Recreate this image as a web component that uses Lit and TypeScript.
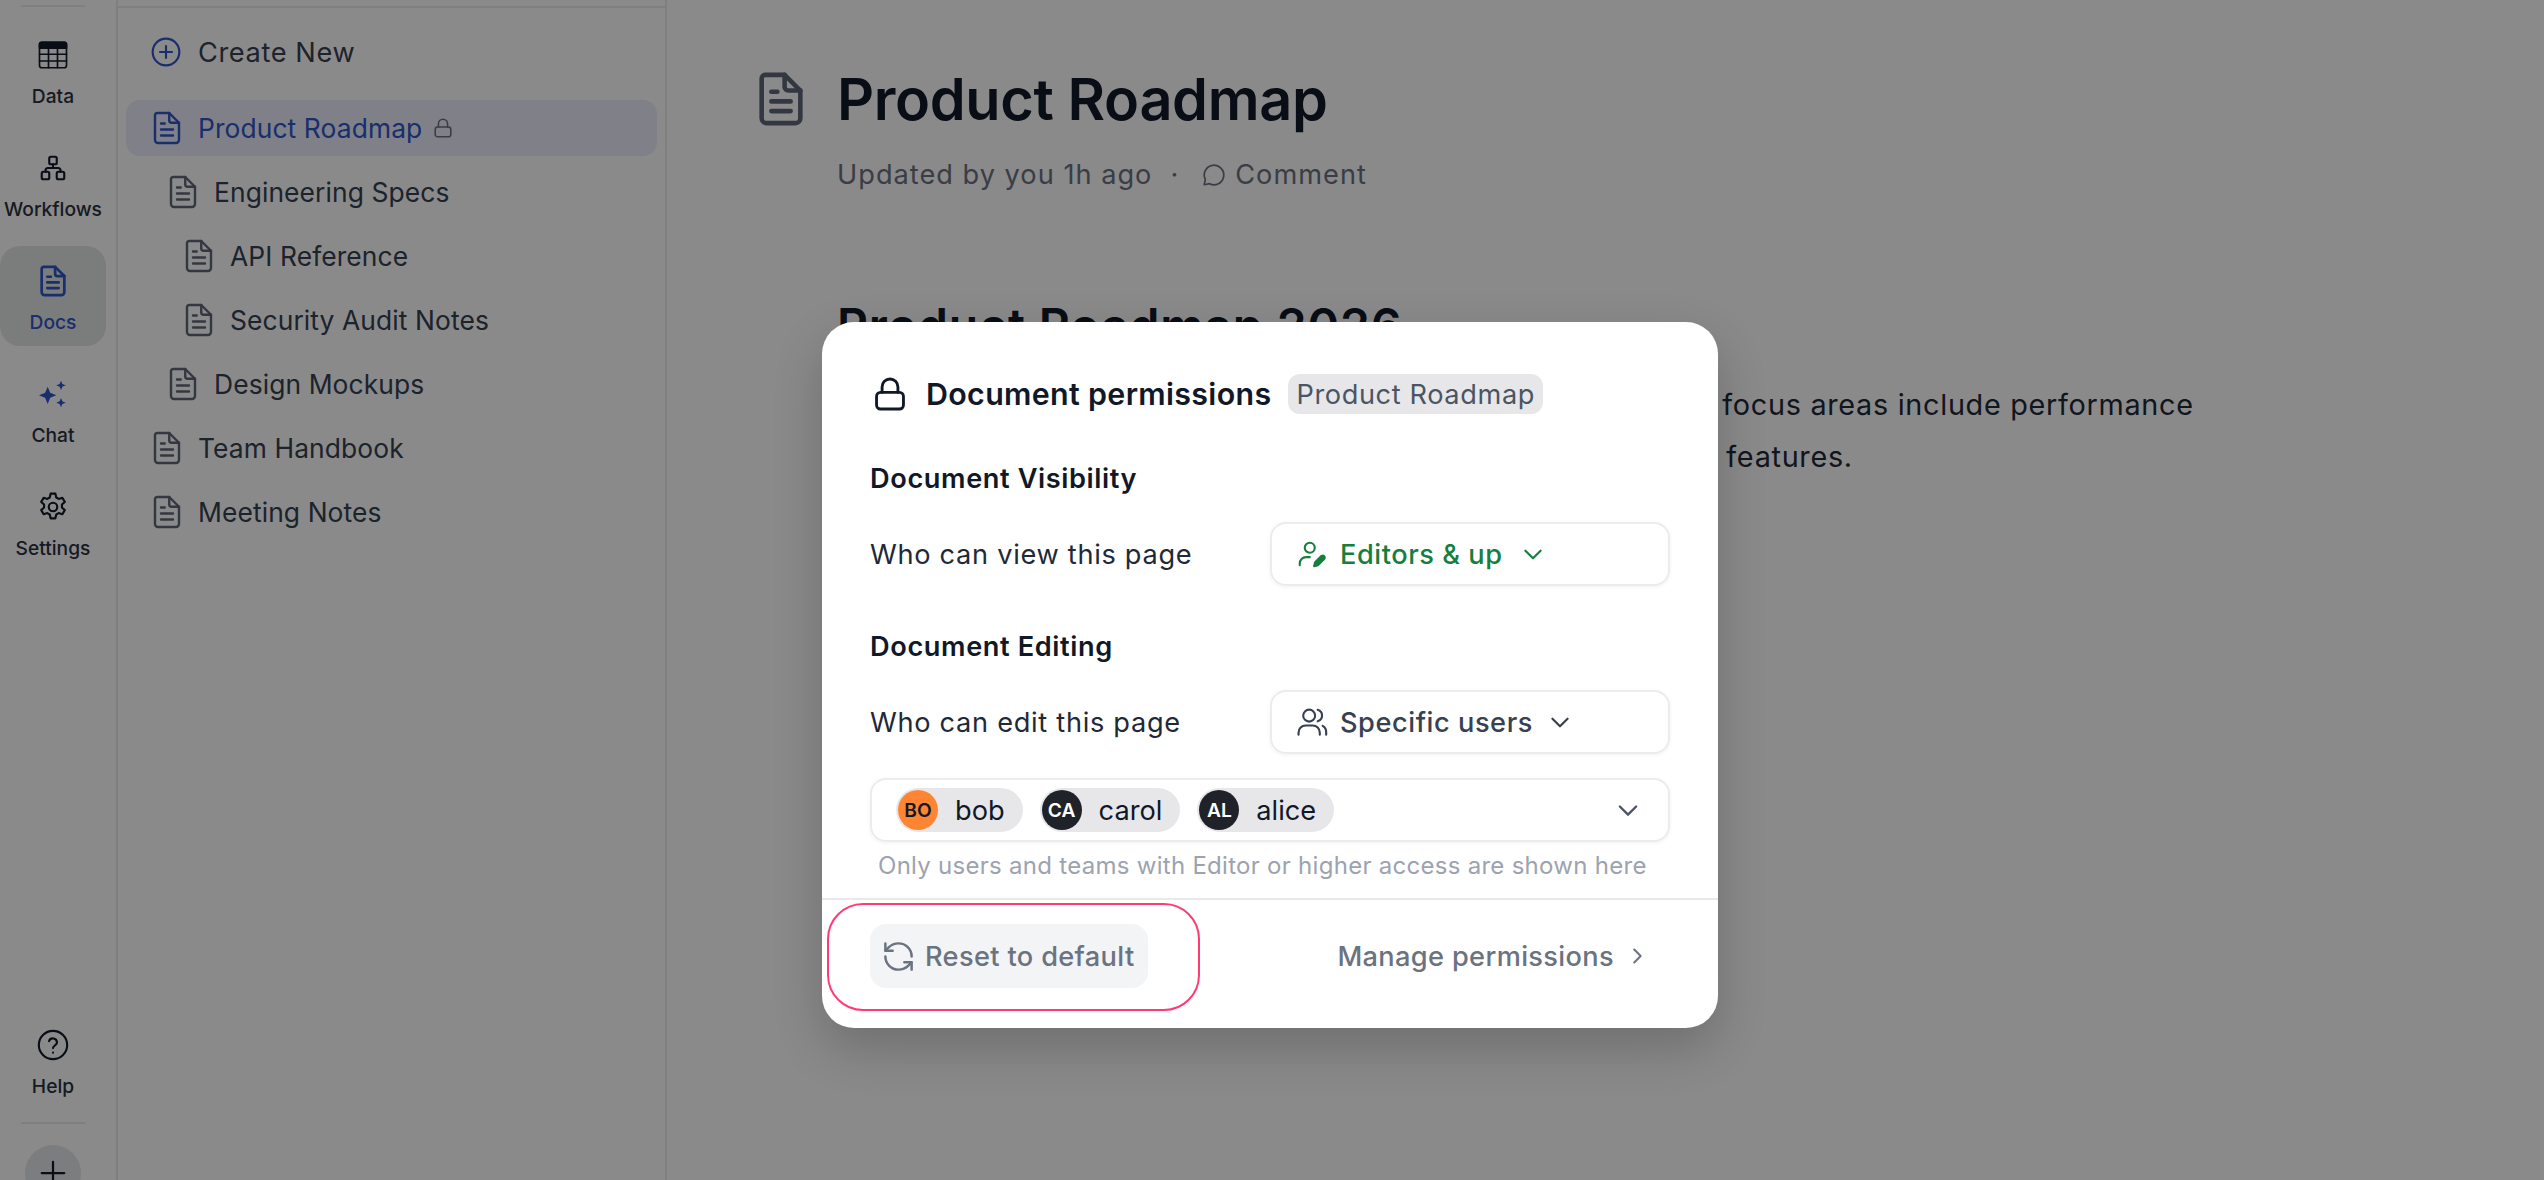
import {LitElement, html, css, svg} from 'lit';
import {customElement} from 'lit/decorators.js';

const icon = (body: unknown, size = 24, width = 1.5) => html`<svg
  width=${size}
  height=${size}
  viewBox="0 0 24 24"
  fill="none"
  stroke="currentColor"
  stroke-width=${width}
  stroke-linecap="round"
  stroke-linejoin="round"
>${body}</svg>`;

const docPath = svg`<path d="M5.500 2h8L20 8.500V20a2 2 0 0 1-2 2H6a2 2 0 0 1-2-2V3.500A1.500 1.500 0 0 1 5.500 2z"/><path d="M13.500 2v5a1.500 1.500 0 0 0 1.500 1.500h5"/><path d="M8 9h2.500M8 13h8M8 17h8"/>`;
const chevronDown = svg`<path d="M5 9l7 7 7-7"/>`;
const lockPath = svg`<rect x="3.500" y="11" width="17" height="10.500" rx="2.500"/><path d="M7 11V7.500a5 5 0 0 1 10 0V11"/>`;

const TREE = [
  {label: 'Product Roadmap', level: 0, active: true},
  {label: 'Engineering Specs', level: 1},
  {label: 'API Reference', level: 2},
  {label: 'Security Audit Notes', level: 2},
  {label: 'Design Mockups', level: 1},
  {label: 'Team Handbook', level: 0},
  {label: 'Meeting Notes', level: 0},
];

const USERS = [
  {initials: 'BO', name: 'bob', tone: 'orange'},
  {initials: 'CA', name: 'carol', tone: 'dark'},
  {initials: 'AL', name: 'alice', tone: 'dark'},
];

@customElement('app-root')
export class AppRoot extends LitElement {
  static styles = css`
    :host {
      display: block;
      position: relative;
      width: 2544px;
      height: 1180px;
      overflow: hidden;
      background: #fff;
      font-family: Inter, 'Noto Sans', sans-serif;
      color: #111827;
    }

    .page {
      display: flex;
      height: 100%;
    }

    .rail {
      flex: none;
      box-sizing: border-box;
      width: 118px;
      height: 1180px;
      padding-right: 10px;
      border-right: 2px solid #ebebeb;
      display: flex;
      flex-direction: column;
      color: #2b3140;
    }

    .rail-line {
      flex: none;
      height: 2px;
      margin: 5px 21px 13px;
      background: #ebebeb;
    }

    .rail-top {
      display: flex;
      flex-direction: column;
      gap: 13px;
    }

    .rail-bottom {
      margin-top: auto;
      margin-bottom: -21px;
      display: flex;
      flex-direction: column;
      align-items: center;
    }

    .rail-item {
      box-sizing: border-box;
      width: 106px;
      height: 100px;
      border-radius: 20px;
      display: flex;
      flex-direction: column;
      align-items: center;
      font-size: 19.2px;
      font-weight: 500;
      line-height: 24px;
      white-space: nowrap;
    }

    .rail-item .glyph {
      height: 36px;
      margin-top: 17px;
      margin-bottom: 11px;
      display: flex;
      align-items: center;
      justify-content: center;
      color: #111827;
    }

    .rail-item.active {
      background: #e3e7e7;
      color: #2f55c8;
    }

    .rail-item.active .glyph,
    .rail-item .glyph.blue {
      color: #2f55c8;
    }

    .rail-divider {
      width: 64px;
      height: 2px;
      margin-top: 12px;
      background: #ebebeb;
    }

    .add {
      width: 56px;
      height: 56px;
      margin-top: 21px;
      border-radius: 50%;
      background: #e5e7eb;
      display: flex;
      align-items: center;
      justify-content: center;
      color: #111827;
    }

    .side {
      flex: none;
      box-sizing: border-box;
      width: 549px;
      height: 1180px;
      border-right: 2px solid #ebebeb;
      padding: 0 8px;
      color: #374151;
      font-size: 26.4px;
      letter-spacing: 0.1px;
    }

    .side-line {
      height: 2px;
      margin: 6px -8px 0;
      background: #ebebeb;
    }

    .create {
      height: 56px;
      margin: 16px 0 20px;
      padding-left: 24px;
      display: flex;
      align-items: center;
      gap: 16px;
      font-size: 27.2px;
      letter-spacing: 0.6px;
    }

    .create svg {
      color: #2f55c8;
    }

    .tree {
      display: flex;
      flex-direction: column;
      gap: 8px;
    }

    .row {
      height: 56px;
      border-radius: 14px;
      display: flex;
      align-items: center;
      gap: 13px;
      color: #374151;
      white-space: nowrap;
    }

    .row .doc {
      flex: none;
      display: flex;
      color: #5f6779;
    }

    .row.active {
      background: #eceefb;
      color: #2f55c8;
    }

    .row.active .doc {
      color: #2f55c8;
    }

    .row .lock {
      display: flex;
      margin-left: -3px;
      color: #6b7280;
    }

    .main {
      flex: 1;
      min-width: 0;
      padding-left: 85px;
    }

    .title-row {
      display: flex;
      align-items: center;
      gap: 27px;
      margin-top: 66px;
      height: 66px;
    }

    .title-row .doc {
      display: flex;
      color: #5f6779;
    }

    h1 {
      margin: 0;
      font-size: 57.6px;
      font-weight: 600;
      line-height: 66px;
      letter-spacing: -0.35px;
      color: #111827;
    }

    .meta {
      margin: 26px 0 0 85px;
      display: flex;
      align-items: center;
      font-size: 27.2px;
      line-height: 34px;
      letter-spacing: 1px;
      color: #6b7280;
    }

    .meta .dot {
      margin: 0 22px 0 18px;
    }

    .meta .comment {
      display: flex;
      align-items: center;
      gap: 8px;
    }

    .doc-body {
      margin-left: 85px;
      width: 1500px;
    }

    h2 {
      margin: 106px 0 0;
      font-size: 48px;
      font-weight: 600;
      line-height: 56px;
      letter-spacing: 0.9px;
      color: #111827;
    }

    .doc-body p {
      margin: 25px 0 0;
      font-size: 28.8px;
      line-height: 52px;
      letter-spacing: 0.7px;
      color: #1f2937;
      white-space: nowrap;
    }

    .overlay {
      position: absolute;
      inset: 0;
      background: rgba(0, 0, 0, 0.46);
      box-sizing: border-box;
      padding: 322px 0 0 822px;
    }

    .dialog {
      width: 896px;
      height: 706px;
      box-sizing: border-box;
      background: #fff;
      border-radius: 32px;
      padding-top: 52px;
      box-shadow: 0 20px 50px rgba(0, 0, 0, 0.2);
      display: flex;
      flex-direction: column;
      position: relative;
    }

    .body {
      padding: 0 48px;
      flex: 1;
    }

    .head {
      height: 40px;
      display: flex;
      align-items: center;
      color: #111827;
    }

    .head .lock {
      display: flex;
      margin-left: 1px;
      margin-right: 17px;
    }

    .head .name {
      font-size: 30.4px;
      font-weight: 600;
      letter-spacing: 0.33px;
    }

    .tag {
      margin-left: 17px;
      height: 40px;
      padding: 0 8px;
      border-radius: 12px;
      background: #e7e7ea;
      color: #4b5563;
      font-size: 27.2px;
      letter-spacing: 0.6px;
      display: flex;
      align-items: center;
    }

    .section {
      margin: 0;
      font-size: 27.2px;
      font-weight: 600;
      line-height: 31px;
      letter-spacing: 0.6px;
      color: #111827;
    }

    .section.first {
      margin-top: 49px;
    }

    .section.second {
      margin-top: 45px;
    }

    .field {
      margin-top: 28px;
      display: flex;
      align-items: center;
      justify-content: space-between;
      font-size: 27.2px;
      letter-spacing: 0.7px;
      color: #1f2937;
    }

    .select {
      box-sizing: border-box;
      width: 400px;
      height: 64px;
      border: 2px solid #ececee;
      border-radius: 16px;
      box-shadow: 0 1px 4px rgba(0, 0, 0, 0.06);
      display: flex;
      align-items: center;
      padding-left: 23px;
      gap: 11px;
      font-size: 27.2px;
      font-weight: 500;
      letter-spacing: 0.55px;
      color: #374151;
    }

    .select.green {
      color: #15803d;
      padding-left: 24px;
      gap: 14px;
    }

    .select .chev {
      display: flex;
      margin-left: 3px;
    }

    .chips {
      box-sizing: border-box;
      margin-top: 24px;
      height: 64px;
      border: 2px solid #ececee;
      border-radius: 16px;
      box-shadow: 0 1px 4px rgba(0, 0, 0, 0.06);
      display: flex;
      align-items: center;
      gap: 17px;
      padding: 0 24px;
    }

    .chip {
      height: 44px;
      border-radius: 22px;
      background: #e7e7ea;
      display: flex;
      align-items: center;
      padding: 0 18px 0 2px;
      gap: 17px;
      font-size: 27.2px;
      color: #111827;
    }

    .avatar {
      width: 40px;
      height: 40px;
      border-radius: 50%;
      display: flex;
      align-items: center;
      justify-content: center;
      font-size: 19.2px;
      font-weight: 600;
    }

    .avatar.orange {
      background: #ff8533;
      color: #111827;
    }

    .avatar.dark {
      background: #1f2329;
      color: #fff;
    }

    .chips .chev {
      margin-left: auto;
      margin-right: 2px;
      display: flex;
      color: #4b5563;
    }

    .hint {
      margin: 8px 0 0 8px;
      font-size: 24px;
      line-height: 32px;
      letter-spacing: 0.28px;
      color: #9ca3af;
      white-space: nowrap;
    }

    .foot {
      flex: none;
      height: 130px;
      box-sizing: border-box;
      border-top: 2px solid #e9e9eb;
      padding: 24px 48px 0;
      display: flex;
      align-items: flex-start;
      justify-content: space-between;
      color: #6b7280;
      font-size: 27.2px;
      font-weight: 500;
      letter-spacing: 0.35px;
    }

    .reset {
      height: 64px;
      box-sizing: border-box;
      width: 278px;
      padding-left: 11px;
      border-radius: 16px;
      background: #f3f4f6;
      display: flex;
      align-items: center;
      gap: 9px;
    }

    .manage {
      height: 64px;
      display: flex;
      align-items: center;
      gap: 12px;
      padding-right: 22px;
    }

    .ring {
      position: absolute;
      left: 5px;
      top: 581px;
      width: 373px;
      height: 108px;
      box-sizing: border-box;
      border: 2px solid #ff3b75;
      border-radius: 36px;
    }
  `;

  private renderRail() {
    return html`
      <nav class="rail">
        <div class="rail-line"></div>
        <div class="rail-top">
          <div class="rail-item">
            <div class="glyph">
              ${icon(svg`<rect x="3" y="3.500" width="18" height="17" rx="1.500"/><path fill="currentColor" d="M3 5A1.500 1.500 0 0 1 4.500 3.500h15A1.500 1.500 0 0 1 21 5v2.500H3z"/><path d="M3 11.500h18M3 16h18M9 7v13.500M15 7v13.500"/>`, 36, 1.1)}
            </div>
            Data
          </div>
          <div class="rail-item">
            <div class="glyph">
              ${icon(svg`<rect x="9" y="3" width="6" height="6" rx="1.300"/><rect x="3" y="15" width="6" height="6" rx="1.300"/><rect x="15" y="15" width="6" height="6" rx="1.300"/><path d="M12 9v3M6 15v-1a2 2 0 0 1 2-2h8a2 2 0 0 1 2 2v1"/>`, 30, 1.7)}
            </div>
            Workflows
          </div>
          <div class="rail-item active">
            <div class="glyph">${icon(docPath, 34, 1.9)}</div>
            Docs
          </div>
          <div class="rail-item">
            <div class="glyph blue">
              <svg width="32" height="32" viewBox="0 0 24 24" fill="currentColor">
                <path d="M8 6.500l1.900 4.600 4.600 1.900-4.600 1.900L8 19.500l-1.900-4.600L1.500 13l4.600-1.900z"/>
                <path d="M18 2l1 2.500 2.500 1-2.500 1-1 2.500-1-2.500-2.500-1 2.500-1z"/>
                <path d="M18 15l1 2.500 2.500 1-2.500 1-1 2.500-1-2.500-2.500-1 2.500-1z"/>
              </svg>
            </div>
            Chat
          </div>
          <div class="rail-item">
            <div class="glyph">
              ${icon(svg`<circle cx="12" cy="12" r="3"/><path d="M10.300 2.600h3.400l.6 2.700 1.700 1 2.600-.8 1.700 2.900-2 1.900v2l2 1.900-1.700 2.900-2.600-.8-1.700 1-.6 2.700h-3.400l-.6-2.700-1.700-1-2.600.8-1.700-2.900 2-1.900v-2l-2-1.900 1.700-2.900 2.600.8 1.700-1z"/>`, 34, 1.5)}
            </div>
            Settings
          </div>
        </div>
        <div class="rail-bottom">
          <div class="rail-item">
            <div class="glyph">
              ${icon(svg`<circle cx="12" cy="12" r="10"/><path d="M9.200 9.200a2.900 2.900 0 0 1 5.600 1c0 1.900-2.800 2.400-2.800 4"/><path d="M12 17.400v.1"/>`, 34, 1.5)}
            </div>
            Help
          </div>
          <div class="rail-divider"></div>
          <div class="add">
            ${icon(svg`<path d="M12 3v18M3 12h18"/>`, 30, 1.8)}
          </div>
        </div>
      </nav>
    `;
  }

  private renderSide() {
    return html`
      <aside class="side">
        <div class="side-line"></div>
        <div class="create">
          ${icon(svg`<circle cx="12" cy="12" r="10"/><path d="M12 7.500v9M7.500 12h9"/>`, 32, 1.6)}
          Create New
        </div>
        <div class="tree">
          ${TREE.map(
            item => html`
              <div
                class="row ${item.active ? 'active' : ''}"
                style="padding-left:${23 + item.level * 16}px"
              >
                <span class="doc">${icon(docPath, 36, 1.6)}</span>
                ${item.label}
                ${item.active
                  ? html`<span class="lock">${icon(lockPath, 22, 1.7)}</span>`
                  : ''}
              </div>
            `
          )}
        </div>
      </aside>
    `;
  }

  private renderMain() {
    return html`
      <main class="main">
        <div class="title-row">
          <span class="doc">${icon(docPath, 58, 1.9)}</span>
          <h1>Product Roadmap</h1>
        </div>
        <div class="meta">
          Updated by you 1h ago
          <span class="dot">·</span>
          <span class="comment">
            ${icon(svg`<path d="M7.900 20A9 9 0 1 0 4 16.100L3 21z"/>`, 26, 1.6)}
            Comment
          </span>
        </div>
        <div class="doc-body">
          <h2>Product Roadmap 2026</h2>
          <p>
            This document outlines the product strategy in 2026. Our key focus areas include performance<br />
            enhancements, a refined editor and several new collaboration features.
          </p>
        </div>
      </main>
    `;
  }

  private renderDialog() {
    return html`
      <div class="overlay">
        <section class="dialog">
          <div class="body">
            <div class="head">
              <span class="lock">${icon(lockPath, 38, 1.8)}</span>
              <span class="name">Document permissions</span>
              <span class="tag">Product Roadmap</span>
            </div>
            <h3 class="section first">Document Visibility</h3>
            <div class="field">
              Who can view this page
              <div class="select green">
                ${icon(svg`<circle cx="11" cy="7" r="4"/><path d="M3 21v-1.500a5 5 0 0 1 5-5h3"/><path fill="currentColor" d="M20.500 13.500a1.600 1.600 0 0 1 2.200 2.200l-5.200 5.200-3 .8.800-3z"/>`, 30, 1.7)}
                Editors &amp; up
                <span class="chev">${icon(chevronDown, 26, 2)}</span>
              </div>
            </div>
            <h3 class="section second">Document Editing</h3>
            <div class="field">
              Who can edit this page
              <div class="select">
                ${icon(svg`<circle cx="10" cy="7.500" r="4.200"/><path d="M2.500 21v-1.500a5 5 0 0 1 5-5h5a5 5 0 0 1 5 5V21"/><path d="M16 3.400a4.200 4.200 0 0 1 0 8.100M19.500 14.700a5 5 0 0 1 2.500 4.500V21"/>`, 34, 1.5)}
                Specific users
                <span class="chev">${icon(chevronDown, 26, 2)}</span>
              </div>
            </div>
            <div class="chips">
              ${USERS.map(
                user => html`
                  <span class="chip">
                    <span class="avatar ${user.tone}">${user.initials}</span>
                    ${user.name}
                  </span>
                `
              )}
              <span class="chev">${icon(chevronDown, 28, 2)}</span>
            </div>
            <div class="hint">
              Only users and teams with Editor or higher access are shown here
            </div>
          </div>
          <footer class="foot">
            <div class="reset">
              ${icon(svg`<path d="M21 12a9 9 0 0 0-9-9 9.750 9.750 0 0 0-6.740 2.740L3 8"/><path d="M3 3v5h5"/><path d="M3 12a9 9 0 0 0 9 9 9.750 9.750 0 0 0 6.740-2.740L21 16"/><path d="M16 16h5v5"/>`, 35, 1.7)}
              Reset to default
            </div>
            <div class="manage">
              Manage permissions
              ${icon(svg`<path d="M9 5l7 7-7 7"/>`, 22, 2.2)}
            </div>
          </footer>
          <div class="ring"></div>
        </section>
      </div>
    `;
  }

  render() {
    return html`
      <div class="page">
        ${this.renderRail()} ${this.renderSide()} ${this.renderMain()}
      </div>
      ${this.renderDialog()}
    `;
  }
}
